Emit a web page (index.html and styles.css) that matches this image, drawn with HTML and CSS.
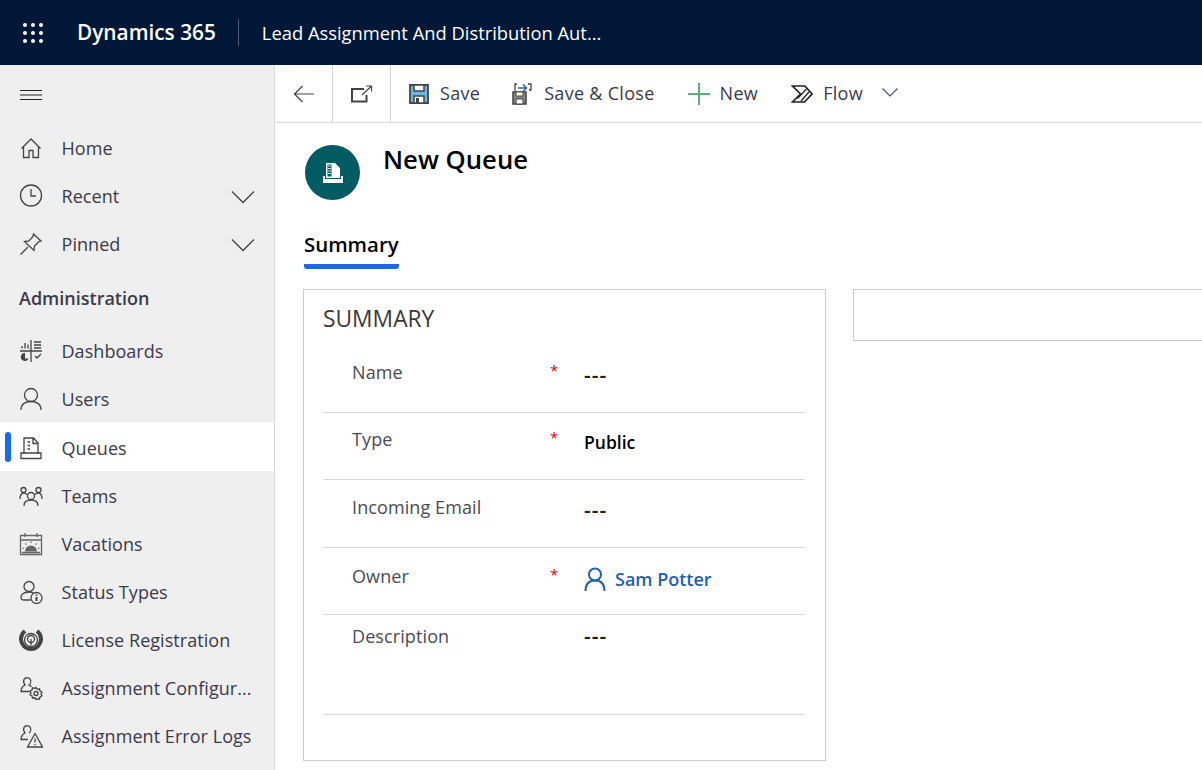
FILE: index.html
```html
<!DOCTYPE html>
<html lang="en">
    <head>
        <meta charset="UTF-8" />
        <title>New Queue</title>
        <link rel="stylesheet" href="styles.css">
    </head>
    <body>
        <header class="topbar">
            <svg class="waffle" width="22" height="22" viewBox="0 0 22 22" fill="#fff">
                <circle cx="3" cy="3" r="2"/><circle cx="11" cy="3" r="2"/><circle cx="19" cy="3" r="2"/>
                <circle cx="3" cy="11" r="2"/><circle cx="11" cy="11" r="2"/><circle cx="19" cy="11" r="2"/>
                <circle cx="3" cy="19" r="2"/><circle cx="11" cy="19" r="2"/><circle cx="19" cy="19" r="2"/>
            </svg>
            <div class="brand">Dynamics 365</div>
            <div class="app-name">Lead Assignment And Distribution Aut...</div>
        </header>

        <div class="main">
            <nav class="sidebar">
                <button class="burger">
                    <svg width="22" height="12" viewBox="0 0 22 12" stroke="#222" fill="none"><path d="M0 1.500h22M0 6h22M0 10.500h22"/></svg>
                </button>

                <a class="nav-item">
                    <svg class="icon" viewBox="0 0 24 24"><path d="M2.500 12.500 12 3l9.500 9.500M4.500 10.500V21.500h5.500v-7h4v7h5.500V10.500"/></svg>
                    <span class="nav-label">Home</span>
                </a>
                <a class="nav-item">
                    <svg class="icon" viewBox="0 0 24 24"><circle cx="12" cy="11.500" r="10.500"/><path d="M12 5v7h5"/></svg>
                    <span class="nav-label">Recent</span>
                    <svg class="nav-chevron" width="24" height="14" viewBox="0 0 24 14"><path d="M1 1.500 12 12.500 23 1.500"/></svg>
                </a>
                <a class="nav-item">
                    <svg class="icon" viewBox="0 0 24 24"><path d="M1.500 22.500 9 15M14.500 2l7.500 7-2 .5-4.500 4.500-.5 4.500L5.500 9.500 10 9l4-4.500z"/></svg>
                    <span class="nav-label">Pinned</span>
                    <svg class="nav-chevron" width="24" height="14" viewBox="0 0 24 14"><path d="M1 1.500 12 12.500 23 1.500"/></svg>
                </a>

                <div class="nav-group">Administration</div>

                <a class="nav-item">
                    <svg class="icon" viewBox="0 0 24 24"><path d="M12 1v22M1 12h22M3 9.500V7M6 9.500V4M9 9.500V5.500M15 3h7M15 6h7M15 9h7M16 17l2 2 4-4"/><path class="solid" d="M6 14a4 4 0 1 0 3.500 5.500H6z"/></svg>
                    <span class="nav-label">Dashboards</span>
                </a>
                <a class="nav-item">
                    <svg class="icon" viewBox="0 0 24 24"><circle cx="12" cy="8" r="6.500"/><path d="M2 23c0-6 4-8.500 10-8.500S22 17 22 23"/></svg>
                    <span class="nav-label">Users</span>
                </a>
                <a class="nav-item active">
                    <svg class="icon" viewBox="0 0 24 24"><path d="M5 18V2h9.500l4.500 5v11M14 2v5.500h5M8.500 6H11M8.500 9.500H11M8.500 13H11M2 17v5.500h20V17z"/></svg>
                    <span class="nav-label">Queues</span>
                </a>
                <a class="nav-item">
                    <svg class="icon" viewBox="0 0 24 24"><circle cx="12" cy="12" r="3.500"/><circle cx="4.500" cy="6" r="2.500"/><circle cx="19.500" cy="6" r="2.500"/><path d="M5 22c0-4 3-6 7-6s7 2 7 6M1 15c0-4 2-6 4-6 1 0 2 .5 3 1.500M23 15c0-4-2-6-4-6-1 0-2 .5-3 1.500"/></svg>
                    <span class="nav-label">Teams</span>
                </a>
                <a class="nav-item">
                    <svg class="icon icon-soft" viewBox="0 0 24 24"><path d="M1.500 3.500h21v19h-21zM1.500 8h21M6 1v4M18 1v4M3 20.500h18M12 9.500v1.500M6.500 11.500l1 1M17.500 11.500l-1 1M3.500 16l1.500.5M20.500 16l-1.500.5"/><path class="solid" d="M6 19.500a6 6 0 0 1 12 0z"/></svg>
                    <span class="nav-label">Vacations</span>
                </a>
                <a class="nav-item">
                    <svg class="icon" viewBox="0 0 24 24"><circle cx="10" cy="6.500" r="5"/><path d="M11.500 20H5c-2 0-3-1-3-3s2-5 8-5c2 0 3.500.3 4.500 1"/><circle cx="17.500" cy="18" r="5.500"/><path class="thick" d="M17.500 17v4M17.500 14.500v1.200"/></svg>
                    <span class="nav-label">Status Types</span>
                </a>
                <a class="nav-item">
                    <svg class="icon icon-license" viewBox="0 0 24 24"><path class="ring" d="M6 3a10 10 0 1 0 12 0"/><circle cx="12" cy="12" r="6.500"/><circle cx="12" cy="11" r="3.500"/><path d="M12 11v6"/></svg>
                    <span class="nav-label">License Registration</span>
                </a>
                <a class="nav-item">
                    <svg class="icon" viewBox="0 0 24 24"><path d="M10.500 15.500H2c0-3.500 2-5.500 4-6.500C4.500 7 4 5.500 5 3.500 6 1.500 9.500 1 11 3c1.300 1.800.8 4.500-1 6 1 .5 2 1.200 2.500 2"/><circle cx="17" cy="17.500" r="2"/><path d="M17 11.500l1.200 1.800 2.300-.5.500 2.200 2 1.200-1 1.800 1 1.800-2 1.200-.5 2-2.300-.2L17 23.500l-1.200-1.700-2.300.2-.5-2-2-1.200 1-1.800-1-1.800 2-1.200.5-2.200 2.300.5z"/></svg>
                    <span class="nav-label">Assignment Configur...</span>
                </a>
                <a class="nav-item">
                    <svg class="icon" viewBox="0 0 24 24"><path d="M9 15.500H2c0-3.500 2-5.500 4-6.500C4.500 7 4 5.500 5 3.500 6 1.500 9.500 1 11 3c1.300 1.800.8 4.500-1 6"/><path d="M16 9.500 23.500 23h-15zM16 14.500v4M16 20v1.300"/></svg>
                    <span class="nav-label">Assignment Error Logs</span>
                </a>
            </nav>

            <main class="content">
                <div class="toolbar">
                    <button class="tool-square">
                        <svg width="22" height="18" viewBox="0 0 22 18" class="stroke-dark"><path d="M21 9H1.500M9.500 1 1.500 9l8 8"/></svg>
                    </button>
                    <button class="tool-square">
                        <svg width="22" height="18" viewBox="0 0 22 18" class="stroke-dark"><path class="thick" d="M13 4H1v12.500h14.500V10"/><path d="M11 10 20 1.500M15 1h5.500v5.500"/></svg>
                    </button>
                    <button class="tool first">
                        <svg width="20" height="20" viewBox="0 0 20 20"><path fill="#6cb4ea" stroke="#444" stroke-width="1.800" d="M1 1h18v18H1z"/><path fill="#fff" stroke="#444" stroke-width="1.500" d="M5 1h10v6H5zM5 19v-7h10v7z"/><path fill="#444" d="M7 14h3v5H7z"/></svg>
                        <span>Save</span>
                    </button>
                    <button class="tool">
                        <svg width="22" height="22" viewBox="0 0 22 22"><path fill="none" stroke="#444" stroke-width="1.300" d="M3 8V1h2M16 1h3v6h-2"/><path fill="none" stroke="#1f66b5" stroke-width="1.500" d="M6 5h8M11 1.500 14.500 5 11 8.500"/><path fill="#888" stroke="#444" stroke-width="1.500" d="M1 9h13v12H1z"/><path fill="#fff" stroke="#444" d="M4 9h7v4H4zM4 21v-5h7v5z"/></svg>
                        <span>Save &amp; Close</span>
                    </button>
                    <button class="tool">
                        <svg width="22" height="22" viewBox="0 0 22 22"><path stroke="#55b17e" stroke-width="2" d="M0 11h22M11 0v22"/></svg>
                        <span>New</span>
                    </button>
                    <button class="tool">
                        <svg width="22" height="18" viewBox="0 0 22 18" fill="none" stroke="#222" stroke-width="1.700"><path d="M1.500 1H14l7 8-7.500 8H1.500L9.500 9z"/><path stroke-width="1.300" d="M15.500 4 6.500 13.500M18 7 10 16"/></svg>
                        <span>Flow</span>
                    </button>
                    <svg class="tool-chevron" width="16" height="9" viewBox="0 0 16 9"><path d="M.5.500 8 8 15.500.500"/></svg>
                </div>

                <div class="record-head">
                    <div class="avatar">
                        <svg width="20" height="20" viewBox="0 0 20 20"><path fill="#fff" d="M3 0h9l5 5v10H3zM0 13h2v3h16v-3h2v7H0z"/><path fill="#005b63" d="M4.500 1.500h4v12h-4zM2 15h16v1H2z"/><path stroke="#d5e6e8" d="M5 3h3M5 5.500h3M5 8h3M5 10.500h3"/></svg>
                    </div>
                    <h1>New Queue</h1>
                </div>

                <div class="tabs"><span class="tab">Summary</span></div>

                <div class="form">
                    <section class="card">
                        <h2>SUMMARY</h2>
                        <div class="row">
                            <span class="label">Name</span><span class="req">*</span><span class="value dashes">---</span>
                        </div>
                        <div class="row row-high">
                            <span class="label">Type</span><span class="req">*</span><span class="value semi">Public</span>
                        </div>
                        <div class="row">
                            <span class="label">Incoming Email</span><span class="req"></span><span class="value dashes">---</span>
                        </div>
                        <div class="row row-low">
                            <span class="label">Owner</span><span class="req">*</span>
                            <span class="value owner">
                                <svg width="22" height="24" viewBox="0 0 22 24" fill="none" stroke="#1f5fb4" stroke-width="2"><circle cx="11" cy="7.500" r="6"/><path d="M1.500 24c0-6.500 3-10.500 9.500-10.500S20.500 17.500 20.500 24"/></svg>
                                <span>Sam Potter</span>
                            </span>
                        </div>
                        <div class="row row-tall">
                            <span class="label">Description</span><span class="req"></span><span class="value dashes">---</span>
                        </div>
                    </section>
                    <section class="card-side"></section>
                </div>
            </main>
        </div>
    </body>
</html>
```

FILE: styles.css
```css
* {
    box-sizing: border-box;
}

html, body {
    height: 100%;
}

body {
    margin: 0;
    overflow: hidden;
    font-family: "Open Sans", "Noto Sans", sans-serif;
    color: #323130;
    background-color: white;
}

button {
    font: inherit;
    color: inherit;
    border: none;
    background: none;
    padding: 0;
}

/* top bar */
.topbar {
    height: 65px;
    display: flex;
    align-items: center;
    background-color: #001738;
    color: white;
}

.waffle {
    margin-left: 22px;
}

.brand {
    margin-left: 33px;
    padding-right: 22px;
    font-size: 20.800px;
    font-weight: 600;
    line-height: 27px;
    border-right: 1px solid #4d5f78;
}

.app-name {
    margin-left: 23px;
    font-size: 18.350px;
}

.main {
    display: flex;
    height: 705px;
}

/* sidebar */
.sidebar {
    width: 275px;
    flex-shrink: 0;
    background-color: #efefef;
    border-right: 1px solid #d8d8d8;
}

.burger {
    display: block;
    height: 59px;
    padding-left: 20px;
}

.nav-item {
    display: flex;
    align-items: center;
    height: 48px;
    padding-left: 19px;
    position: relative;
}

.icon {
    width: 24px;
    height: 24px;
    flex-shrink: 0;
    fill: none;
    stroke: #444;
    stroke-width: 1.300;
}

.icon .solid {
    fill: #444;
    stroke: none;
}

.icon .thick {
    stroke-width: 2;
}

.icon-soft {
    stroke: #666;
}

.icon-soft .solid {
    fill: #666;
}

.icon-license .ring {
    stroke-width: 4;
}

.nav-label {
    margin-left: 18.500px;
    font-size: 18px;
    letter-spacing: 0.050px;
    color: #3b3a4a;
    white-space: nowrap;
}

.nav-chevron {
    position: absolute;
    right: 19px;
    top: 18px;
    fill: none;
    stroke: #444;
    stroke-width: 1.300;
}

.nav-group {
    height: 59px;
    padding: 18px 0 0 19px;
    font-size: 18px;
    font-weight: 600;
    line-height: 24px;
    color: #3b3a4a;
}

.nav-item.active {
    background-color: white;
    height: 49px;
    margin: -1px 0 1px;
    padding-top: 2px;
}

.nav-item.active::before {
    content: "";
    position: absolute;
    left: 5px;
    top: 10px;
    width: 6px;
    height: 30px;
    border-radius: 3px;
    background-color: #0f6cff;
}

/* command bar */
.content {
    flex: 1;
    min-width: 0;
}

.toolbar {
    display: flex;
    align-items: center;
    height: 58px;
    border-bottom: 1px solid #d8d8d8;
}

.tool-square {
    width: 58px;
    height: 57px;
    display: flex;
    align-items: center;
    justify-content: center;
    border-right: 1px solid #d4d4d4;
}

.stroke-dark {
    fill: none;
    stroke: #444;
    stroke-width: 1.200;
}

.stroke-dark .thick {
    stroke-width: 2;
}

.tool {
    display: flex;
    align-items: center;
    gap: 10px;
    margin-left: 33px;
    font-size: 18px;
    letter-spacing: 0.300px;
    color: #3b3a4a;
}

.tool span {
    margin-top: -2px;
}

.tool.first {
    gap: 11px;
    margin-left: 18px;
    margin-right: -1px;
}

.tool-chevron {
    margin-left: 19px;
    margin-bottom: 3px;
    fill: none;
    stroke: #444a7a;
    stroke-width: 1.100;
}

/* record header */
.record-head {
    display: flex;
    padding: 22px 0 0 30px;
    height: 107px;
}

.avatar {
    width: 55px;
    height: 55px;
    border-radius: 50%;
    background-color: #005b63;
    display: flex;
    align-items: center;
    justify-content: center;
}

.record-head h1 {
    margin: 0 0 0 23px;
    font-size: 25.700px;
    font-weight: 600;
    line-height: 30px;
    color: black;
}

/* tabs */
.tabs {
    padding-left: 29px;
    height: 59px;
}

.tab {
    display: inline-block;
    height: 39px;
    font-size: 20.400px;
    font-weight: 600;
    line-height: 28px;
    color: black;
    border-bottom: 5px solid #2266e3;
    border-radius: 0 0 3px 3px;
}

/* form */
.form {
    display: flex;
    align-items: flex-start;
    gap: 27px;
    padding-left: 28px;
}

.card {
    width: 523px;
    height: 472px;
    flex-shrink: 0;
    padding: 0 20px 0 19px;
    border: 1px solid #cccccc;
}

.card h2 {
    margin: 0;
    height: 55px;
    padding-top: 14px;
    font-size: 22.800px;
    font-weight: 400;
    line-height: 30px;
    color: #3b3a39;
}

.card-side {
    flex: 1;
    height: 52px;
    margin-right: -2px;
    border: 1px solid #cccccc;
}

.row {
    display: flex;
    align-items: flex-start;
    height: 67.500px;
    padding-top: 15px;
    border-bottom: 1px solid #d8d8d8;
}

.row-high {
    padding-top: 14px;
}

.row-low {
    padding-top: 16px;
}

.row-tall {
    height: 100px;
    padding-top: 9px;
}

.label {
    width: 198px;
    margin-left: 29px;
    font-size: 18px;
    letter-spacing: 0.100px;
    line-height: 24px;
    color: #4a4a55;
}

.req {
    width: 34px;
    font-size: 15px;
    color: #d8002a;
    line-height: 20px;
}

.value {
    font-size: 18px;
    line-height: 24px;
    padding-top: 3px;
    color: black;
}

.row-tall .value {
    padding-top: 0;
}

.dashes {
    font-size: 21px;
    font-weight: 600;
    letter-spacing: 1px;
    color: #222;
}

.semi {
    font-size: 17.500px;
    font-weight: 600;
}

.owner {
    display: flex;
    align-items: center;
    gap: 9px;
    font-weight: 600;
    color: #1f5fb4;
}
```
